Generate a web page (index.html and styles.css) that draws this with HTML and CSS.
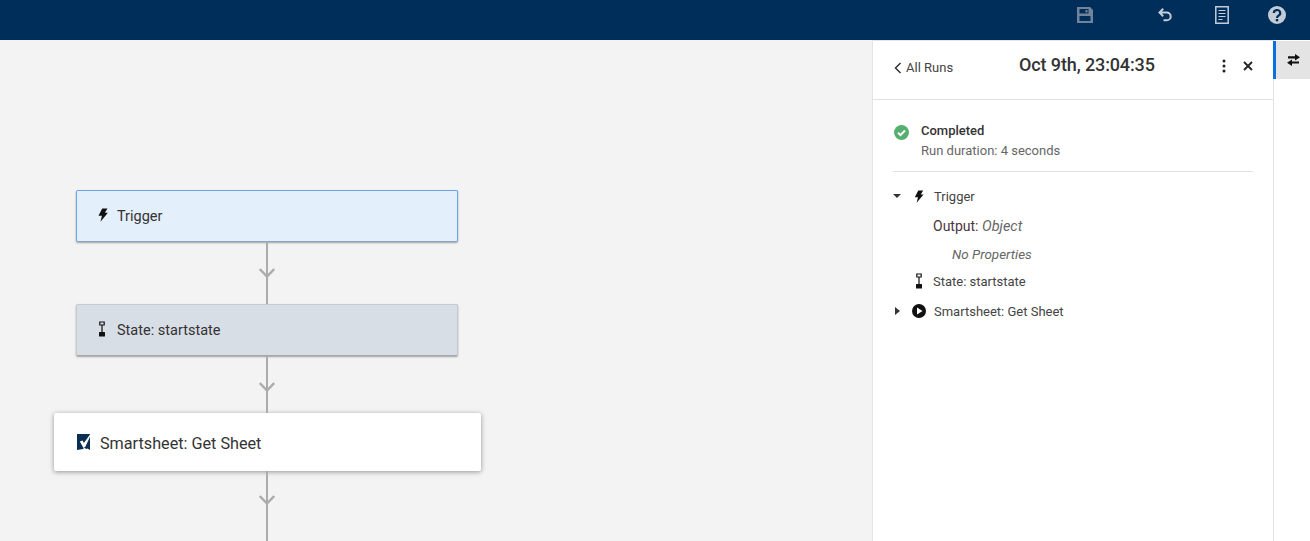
FILE: index.html
```html
<!DOCTYPE html>
<html lang="en">
<head>
<meta charset="utf-8">
<title>Run</title>
<link rel="stylesheet" href="styles.css">
</head>
<body>
<header class="topbar">
  <svg class="tb-icon tb-save" viewBox="0 0 16 16" width="16" height="16"><path fill="#71849a" fill-rule="evenodd" d="M0 0h13l3 3v13H0zM2.500 2v4.500h9V2zM8.500 3h2v2.500h-2zM2.500 9v5h11V9z"/></svg>
  <svg class="tb-icon tb-undo" viewBox="0 0 14 14" width="14" height="14"><path fill="none" stroke="#c3ccd6" stroke-width="2" d="M1.500 4.500h7.300a3.900 3.900 0 0 1 0 7.800H5.500M5.200.8 1.500 4.500l3.700 3.700"/></svg>
  <svg class="tb-icon tb-doc" viewBox="0 0 14 18" width="14" height="18"><path fill="none" stroke="#c3ccd6" stroke-width="1.500" d="M.8.8h12.400v16.400H.8z"/><path fill="none" stroke="#c3ccd6" stroke-width="1.200" d="M3.500 4.500h7M3.500 7.500h7M3.500 10.500h7M3.500 13.500h4"/></svg>
  <svg class="tb-icon tb-help" viewBox="0 0 18 18" width="18" height="18"><circle cx="9" cy="9" r="9" fill="#c3ccd6"/><path fill="none" stroke="#002e5b" stroke-width="2.200" d="M5.800 7a3.200 3 0 1 1 4.600 2.700C9.400 10.300 9 10.700 9 12"/><rect x="7.800" y="13" width="2.400" height="2.300" fill="#002e5b"/></svg>
</header>
<main class="workspace">
  <section class="canvas">
    <div class="node node-trigger">
      <svg class="node-icon" viewBox="0 0 10 14" width="10" height="14"><path fill="#111" d="M4.200.5h5.300L6.900 4.800h3L2.500 13.700l1.400-6H.5z"/></svg>
      <span>Trigger</span>
    </div>
    <div class="link link-a"><svg class="chevron" viewBox="0 0 16 10" width="16" height="10"><path fill="none" stroke="#acacac" stroke-width="2.400" d="M.8 1 8 8.500 15.200 1"/></svg></div>
    <div class="node node-state">
      <svg class="node-icon" viewBox="0 0 8 16" width="8" height="16"><path fill="none" stroke="#111" stroke-width="1.200" d="M1.800 1h4.400v3H1.800zM4 4v7"/><rect x="1" y="11" width="6" height="4.500" rx=".5" fill="#111"/></svg>
      <span>State: startstate</span>
    </div>
    <div class="link link-b"><svg class="chevron" viewBox="0 0 16 10" width="16" height="10"><path fill="none" stroke="#acacac" stroke-width="2.400" d="M.8 1 8 8.500 15.200 1"/></svg></div>
    <div class="node node-action">
      <svg class="node-icon" viewBox="0 0 13 16" width="13" height="16"><path fill="#0b2f52" d="M0 0h13v16l-2.500-1.500-1.500.5-1.500-1.500L6 15l-6 1z"/><path fill="#fff" d="M2.800 7.500 5.600 6.500l1.300 2.600L13 .5v2.200L8.500 12.500 6.500 14z"/></svg>
      <span>Smartsheet: Get Sheet</span>
    </div>
    <div class="link link-c"><svg class="chevron" viewBox="0 0 16 10" width="16" height="10"><path fill="none" stroke="#acacac" stroke-width="2.400" d="M.8 1 8 8.500 15.200 1"/></svg></div>
  </section>
  <aside class="panel">
    <div class="panel-head">
      <a class="back">
        <svg viewBox="0 0 8 12" width="8" height="12"><path fill="none" stroke="#333" stroke-width="1.500" d="M6.500 1 1.500 6l5 5"/></svg>
        <span>All Runs</span>
      </a>
      <h1 class="run-title">Oct 9th, 23:04:35</h1>
      <div class="head-actions">
        <svg viewBox="0 0 4 14" width="4" height="14"><circle cx="2" cy="2" r="1.500" fill="#222"/><circle cx="2" cy="7" r="1.500" fill="#222"/><circle cx="2" cy="12" r="1.500" fill="#222"/></svg>
        <svg viewBox="0 0 10 10" width="10" height="10"><path fill="none" stroke="#222" stroke-width="1.800" d="m1 1 8 8M9 1 1 9"/></svg>
      </div>
    </div>
    <div class="panel-body">
      <div class="status">
        <svg class="status-icon" viewBox="0 0 16 16" width="15" height="15"><circle cx="8" cy="8" r="8" fill="#55b06f"/><path fill="none" stroke="#fff" stroke-width="2.200" d="m4.300 8.200 2.600 2.600 4.800-5"/></svg>
        <div class="status-text">
          <div class="status-title">Completed</div>
          <div class="status-sub">Run duration: 4 seconds</div>
        </div>
      </div>
      <ul class="tree">
        <li class="row row-trigger">
          <span class="caret caret-down"></span>
          <svg class="row-icon" viewBox="0 0 10 14" width="10" height="13"><path fill="#111" d="M4.200.5h5.300L6.900 4.800h3L2.500 13.700l1.400-6H.5z"/></svg>
          <span class="row-label">Trigger</span>
        </li>
        <li class="output">Output: <em>Object</em></li>
        <li class="noprops">No Properties</li>
        <li class="row row-state">
          <svg class="row-icon-state" viewBox="0 0 8 16" width="8" height="16"><path fill="none" stroke="#111" stroke-width="1.200" d="M1.800 1h4.400v3H1.800zM4 4v7"/><rect x="1" y="11" width="6" height="4.500" rx=".5" fill="#111"/></svg>
          <span class="row-label">State: startstate</span>
        </li>
        <li class="row row-action">
          <span class="caret caret-right"></span>
          <svg class="row-icon-play" viewBox="0 0 14 14" width="14" height="14"><circle cx="7" cy="7" r="7" fill="#111"/><path fill="#fff" d="M5 3.500 10.500 7 5 10.500z"/></svg>
          <span class="row-label">Smartsheet: Get Sheet</span>
        </li>
      </ul>
    </div>
  </aside>
  <nav class="rail">
    <div class="rail-tab">
      <svg viewBox="0 0 13 12" width="13" height="12"><path fill="#111" d="M1 2.300h7V0l5 3.300-5 3.200V4.400H1zM12 7.500H5V5.500L0 8.800 5 12V9.600h7z"/></svg>
    </div>
  </nav>
</main>
</body>
</html>
```

FILE: styles.css
```css
* { box-sizing: border-box; }
html, body { margin: 0; height: 100%; overflow: hidden; }
body {
  font-family: Roboto, "Liberation Sans", sans-serif;
  color: #333;
  background: #fff;
  display: flex;
  flex-direction: column;
  height: 541px;
}
.topbar {
  height: 40px;
  flex: none;
  background: #002e5b;
  position: relative;
}
.tb-icon { position: absolute; }
.tb-save { left: 1077px; top: 7px; }
.tb-undo { left: 1158px; top: 8px; }
.tb-doc { left: 1215px; top: 6px; }
.tb-help { left: 1268px; top: 6px; }

.workspace { flex: 1; display: flex; min-height: 0; }

.canvas {
  width: 872px;
  flex: none;
  background: #f3f3f3;
  padding: 150px 0 0 54px;
  display: flex;
  flex-direction: column;
  overflow: hidden;
}
.node {
  display: flex;
  align-items: center;
  color: #333;
  border-radius: 2px;
}
.node-trigger, .node-state {
  width: 382px;
  height: 52px;
  margin-left: 22px;
  font-size: 14.5px;
  padding: 1px 0 0 21px;
  box-shadow: 0 1px 2px rgba(0, 0, 0, .35);
}
.node-trigger { background: #e3effb; border: 1px solid #6aa5ea; border-bottom-color: #8ba6c4; }
.node-state { background: #d8dee5; border: 1px solid #c4cad0; border-bottom-color: #a4a8ad; }
.node-action {
  width: 427px;
  height: 58px;
  background: #fff;
  font-size: 16.2px;
  padding: 2px 0 0 23px;
  box-shadow: 0 1px 5px rgba(0, 0, 0, .4);
}
.node-trigger .node-icon { margin: -2px 9px 0 0; }
.node-state .node-icon { margin: -2px 11px 0 0; }
.node-action .node-icon { margin: -2px 10px 0 0; }
.link {
  width: 2px;
  margin-left: 212px;
  background: #acacac;
  position: relative;
}
.link-a { height: 62px; }
.link-b { height: 58px; }
.link-c { height: 70px; }
.chevron { position: absolute; left: -7px; }
.link-a .chevron { top: 26px; }
.link-b .chevron { top: 26px; }
.link-c .chevron { top: 24px; }

.panel {
  width: 402px;
  flex: none;
  background: #fff;
  border-top: 1px solid #e4e4e4;
  border-left: 1px solid #e4e4e4;
  border-right: 1px solid #e4e4e4;
  display: flex;
  flex-direction: column;
}
.panel-head {
  height: 59px;
  flex: none;
  border-bottom: 1px solid #e2e2e2;
  display: flex;
  align-items: center;
  padding: 0 20px 8px;
}
.back {
  display: flex;
  align-items: center;
  gap: 4px;
  font-size: 13px;
  color: #444;
  width: 126px;
  padding: 3px 0 0 1px;
}
.run-title {
  margin: 0;
  padding-bottom: 2px;
  font-size: 18px;
  font-weight: 500;
  letter-spacing: -.12px;
  color: #333;
  white-space: nowrap;
  line-height: 1;
}
.head-actions {
  margin-left: auto;
  display: flex;
  align-items: center;
  gap: 17px;
}
.panel-body { padding: 0 20px; flex: 1; }
.status {
  display: flex;
  align-items: flex-start;
  padding: 22px 0 11px;
  border-bottom: 1px solid #e2e2e2;
}
.status-icon { margin: 3px 12px 0 1px; flex: none; }
.status-title { font-size: 13px; font-weight: 500; line-height: 18px; color: #333; }
.status-sub { font-size: 13px; line-height: 18px; margin-top: 2px; color: #666; }

.tree { list-style: none; margin: 0; padding: 0; font-size: 13px; color: #444; }
.row { display: flex; align-items: center; height: 18px; }
.row-trigger { margin-top: 15px; }
.caret { width: 0; height: 0; border-style: solid; flex: none; }
.caret-down { border-width: 4px 4px 0; border-color: #333 transparent transparent; margin-right: 13px; }
.caret-right { border-width: 4px 0 4px 5px; border-color: transparent transparent transparent #333; margin: 0 12px 0 2px; }
.row-icon { margin-right: 10px; flex: none; }
.row-state { margin-top: 8px; padding-left: 22px; }
.row-icon-state { margin-right: 10px; flex: none; }
.row-action { margin-top: 12px; }
.row-icon-play { margin-right: 8px; flex: none; }
.output { margin-top: 11px; padding-left: 40px; font-size: 14px; line-height: 20px; color: #4a3440; }
.output em { color: #666; font-size: 14.5px; }
.noprops { margin-top: 9px; padding-left: 59px; font-size: 13.4px; font-style: italic; line-height: 18px; color: #666; }

.rail { flex: 1; background: #fff; }
.rail-tab {
  height: 38px;
  margin: 1px 0 0 -1px;
  background: #e4e4e4;
  border-left: 3px solid #0a6fe0;
  display: flex;
  align-items: center;
  justify-content: center;
}
```
